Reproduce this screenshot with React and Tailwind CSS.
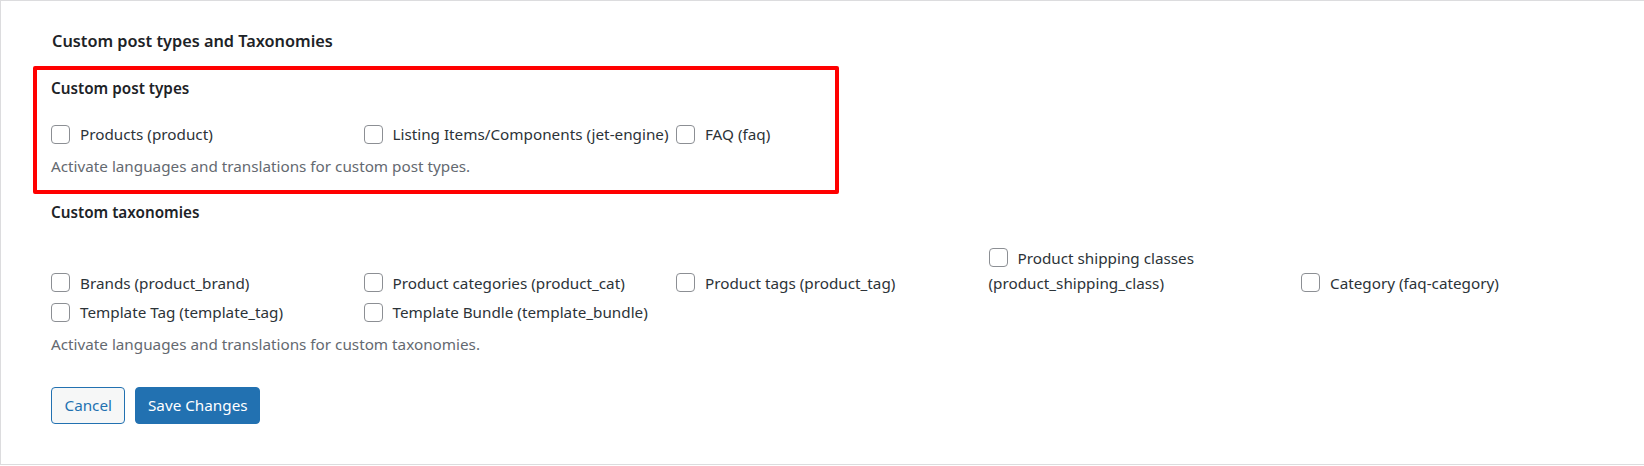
const postTypes = [
  'Products (product)',
  'Listing Items/Components (jet-engine)',
  'FAQ (faq)',
]

const taxonomies = [
  'Brands (product_brand)',
  'Product categories (product_cat)',
  'Product tags (product_tag)',
  'Product shipping classes (product_shipping_class)',
  'Category (faq-category)',
  'Template Tag (template_tag)',
  'Template Bundle (template_bundle)',
]

function CheckItem({ label }) {
  return (
    <li className="inline-block w-[312.5px] align-baseline leading-[25px] mb-[4.5px]">
      <label className="text-[15.25px] text-[#2c3338]">
        <span className="inline-block align-middle w-[19px] h-[19px] -mt-[3px] mr-[10px] rounded-[4px] border border-[#8c8f94] bg-white" />
        {label}
      </label>
    </li>
  )
}

function Section({ title, items, note }) {
  return (
    <div>
      <h3 className="text-[15.25px] leading-[20px] font-semibold text-[#1d2327]">{title}</h3>
      {/* list runs wider than the highlight box, like the real settings table */}
      <ul className="mt-[24px] w-[1580px]">
        {items.map((item) => (
          <CheckItem key={item} label={item} />
        ))}
      </ul>
      <p className="mt-[4px] text-[15.25px] leading-[20px] text-[#646970]">{note}</p>
    </div>
  )
}

export default function App() {
  return (
    <div className="h-[466px] bg-white overflow-hidden" style={{ fontFamily: '"Noto Sans", sans-serif' }}>
      <div className="h-[465px] border-t border-l border-b border-[#dcdcde] pl-[32px] pt-[28px]">
        <h2 className="pl-[19px] text-[16.3px] leading-[24px] font-semibold text-[#1d2327]">
          Custom post types and Taxonomies
        </h2>

        {/* highlighted block */}
        <div className="mt-[13px] w-[806px] border-4 border-[#ff0000] rounded-[2px] pl-[14px] pt-[8px] pb-[14px]">
          <Section
            title="Custom post types"
            items={postTypes}
            note="Activate languages and translations for custom post types."
          />
        </div>

        <div className="pl-[18px] pt-[8px]">
          <Section
            title="Custom taxonomies"
            items={taxonomies}
            note="Activate languages and translations for custom taxonomies."
          />

          <div className="mt-[33px] flex gap-[10px]">
            <button className="h-[37px] px-[12.5px] rounded-[4px] border border-[#2271b1] bg-[#f6f7f7] text-[15.25px] text-[#2271b1]">
              Cancel
            </button>
            <button className="h-[37px] px-[11.5px] rounded-[4px] border border-[#2271b1] bg-[#2271b1] text-[15.25px] text-white">
              Save Changes
            </button>
          </div>
        </div>
      </div>
    </div>
  )
}
